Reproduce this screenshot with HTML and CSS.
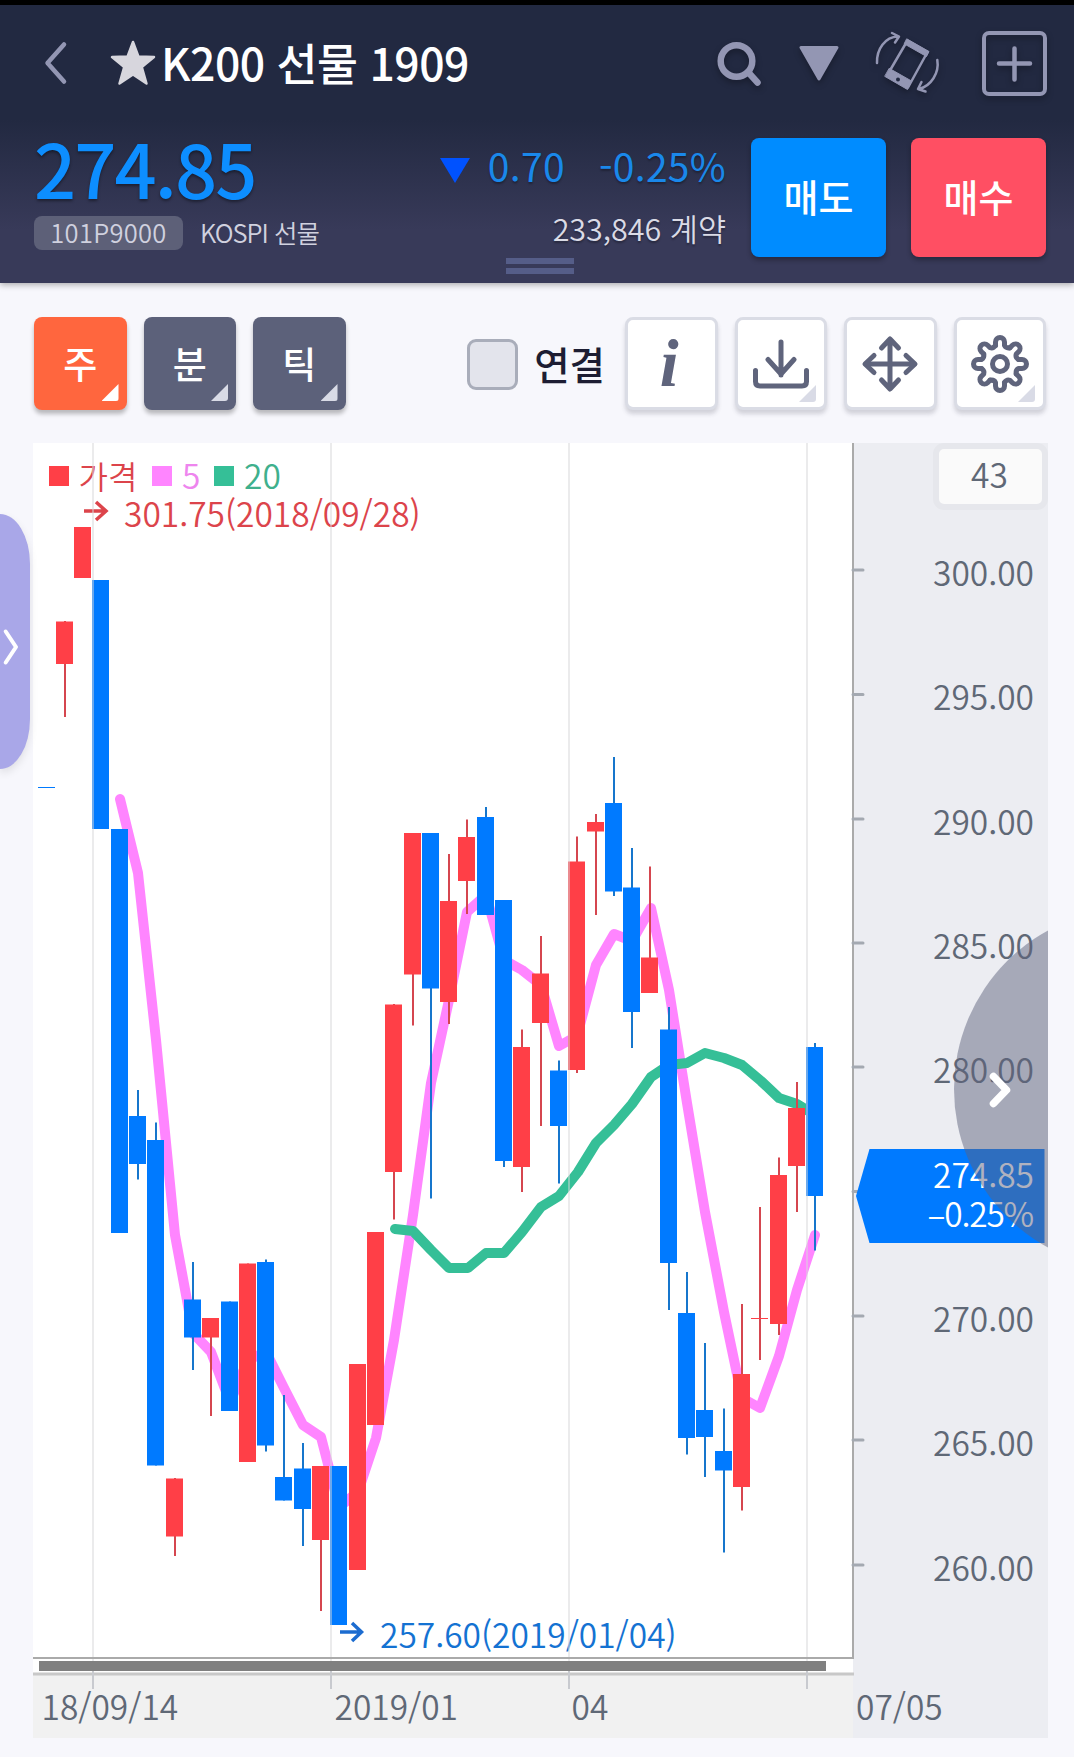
FILE: index.html
```html
<!DOCTYPE html>
<html lang="ko">
<head>
    <meta charset="UTF-8">
    <meta name="viewport" content="width=device-width, initial-scale=1.0">
    <title>K200 선물 1909</title>
    <link rel="stylesheet" href="styles.css">
</head>
<body>

    <header class="header">
        <div class="title-row">
            <svg class="icon-back" width="24" height="44" viewBox="0 0 24 44"><path d="M20 3.5L3.5 22L20 40.500"/></svg>
            <svg class="icon-star" width="46" height="46" viewBox="0 0 46 46"><path d="M23 2L28.400 16.500L44 17L31.800 27L36.500 43.500L23 34.500L9.500 43.500L14.200 27L2 17L17.600 16.500Z"/></svg>
            <h1 class="title">K200 선물 1909</h1>
            <div class="title-icons">
                <svg width="46" height="46" viewBox="0 0 46 46">
                    <circle cx="20.500" cy="21" r="15.800" fill="none" stroke="#9396b3" stroke-width="6.500"/>
                    <path d="M32 32L41.500 42.500" stroke="#9396b3" stroke-width="6.500" stroke-linecap="round"/>
                </svg>
                <svg class="icon-drop" width="42" height="36" viewBox="0 0 42 36"><path d="M3 2.500H39L21 34Z"/></svg>
                <svg class="icon-rotate" width="66" height="64" viewBox="875 30 66 64">
                    <path d="M907.500 39.500L927.500 51L908 86.500L887 74.500Z"/>
                    <path class="solid" d="M907 38L929 50.500L926.500 55.500L904.500 43ZM889.500 67.500L911.500 80L907.500 88.500L885 75.500Z"/>
                    <circle class="dot" cx="898" cy="78.500" r="2"/>
                    <path d="M877 62C876.500 48 885 36 898 35.500M892 32L899 35.500L895 41.500"/>
                    <path d="M937.300 59C939.500 72 931 85 919 88M921.500 81L918 88L925.500 90.500"/>
                </svg>
                <svg class="icon-plus" width="65" height="65" viewBox="0 0 65 65">
                    <rect x="2" y="2" width="61" height="61" rx="5"/>
                    <path d="M32.500 17.500V48.500M17 32.500H48"/>
                </svg>
            </div>
        </div>
        <div class="quote-row">
            <div class="quote-left">
                <div class="price">274.85</div>
                <div class="code-line">
                    <span class="code">101P9000</span>
                    <span class="market">KOSPI 선물</span>
                </div>
            </div>
            <div class="quote-right">
                <div class="change">
                    <svg class="icon-down" width="30" height="25" viewBox="0 0 30 25"><path d="M0 0H30L15 25Z" fill="#0052ff"/></svg>
                    <span>0.70</span>
                    <span class="rate">-0.25%</span>
                </div>
                <div class="volume">233,846 계약</div>
            </div>
            <button class="order sell">매도</button>
            <button class="order buy">매수</button>
        </div>
        <div class="grip"></div>
    </header>

    <nav class="toolbar">
        <button class="period active">주</button>
        <button class="period">분</button>
        <button class="period">틱</button>
        <label class="link"><span class="checkbox"></span>연결</label>
        <button class="tool info">i</button>
        <button class="tool corner">
            <svg width="60" height="60" viewBox="-30 -30 60 60"><path d="M0-22V11M-13-4.500L0 10L13-4.500M-25.500 6.500V17.500Q-25.500 22 -21 22H21Q25.500 22 25.500 17.500V6.500"/></svg>
        </button>
        <button class="tool">
            <svg width="60" height="60" viewBox="-30 -30 60 60">
                <path d="M0-24V24M-8.500-16L0-25L8.500-16M-8.500 16L0 25L8.500 16M-16-8.500L-25 0L-16 8.500M16-8.500L25 0L16 8.500"/>
                <path d="M-24 0H24"/>
            </svg>
        </button>
        <button class="tool corner">
            <svg width="60" height="60" viewBox="-30 -30 60 60">
                <defs><path id="tooth" d="M-4.500-18.500V-22a4.500 4.500 0 0 1 9 0v3.500Q6-15.500 9.900-16.300"/></defs>
                <use href="#tooth"/>
                <use href="#tooth" transform="rotate(45)"/>
                <use href="#tooth" transform="rotate(90)"/>
                <use href="#tooth" transform="rotate(135)"/>
                <use href="#tooth" transform="rotate(180)"/>
                <use href="#tooth" transform="rotate(225)"/>
                <use href="#tooth" transform="rotate(270)"/>
                <use href="#tooth" transform="rotate(315)"/>
                <circle r="7.500"/>
            </svg>
        </button>
    </nav>

    <main class="chart">
        <svg id="chart" width="1015" height="1295" viewBox="33 443 1015 1295">
            <rect x="33" y="443" width="820" height="1231" fill="#fff"/>
            <rect x="33" y="1675" width="820" height="63" fill="#f1f1f1"/>
            <rect x="853" y="443" width="195" height="1295" fill="#ecedf2"/>

            <polyline class="ma5" points="120,799 138,873 156,1040 175,1235 193,1333 211,1352 230,1402 248,1360 266,1352 284,1388 303,1425 321,1437 339,1507 358,1492 376,1438 394,1340 413,1215 431,1083 449,1000 467,912 486,895 504,960 522,970 541,985 559,1046 577,1036 596,965 614,934 632,941 651,908 669,990 687,1103 705,1212 724,1312 742,1398 760,1408 779,1356 797,1290 815,1235"/>
            <polyline class="ma20" points="395,1229 413,1231 431,1250 449,1268 468,1268 486,1253 504,1253 522,1232 541,1207 559,1196 578,1172 596,1143 614,1125 632,1104 651,1077 669,1065 687,1063 705,1053 724,1058 742,1065 761,1081 779,1098 797,1104 815,1115"/>
            <g id="candles"></g>

            <g class="legend">
                <rect x="49" y="466" width="20" height="20" fill="#ff3f47"/>
                <text x="78.500" y="489" class="red">가격</text>
                <rect x="152" y="466" width="20" height="20" fill="#ff85ff"/>
                <text x="182" y="489" class="pink">5</text>
                <rect x="214" y="466" width="20" height="20" fill="#35bf97"/>
                <text x="244" y="489" class="green">20</text>
            </g>
            <path class="arrow high" d="M84 511H106M96 502L106 511L96 520"/>
            <text x="124" y="527" class="red">301.75(2018/09/28)</text>
            <path class="arrow low" d="M340 1632H361M352 1623L361.500 1632L352 1641"/>
            <text x="380" y="1647.500" class="blue">257.60(2019/01/04)</text>

            <path class="grid" d="M93 443V1661M331 443V1661M569 443V1661M807 443V1661"/>
            <path d="M33 1658H853V443" fill="none" stroke="#aaa" stroke-width="2"/>
            <rect x="39" y="1661" width="787" height="10" fill="#808080"/>
            <path d="M33 1674H854" stroke="#c8c8c8" stroke-width="3"/>
            <path d="M93 1671V1689M331 1671V1689M569 1671V1689M807 1671V1689" stroke="#c8cacf" stroke-width="2"/>

            <g class="axis">
                <path d="M853 570H863M853 694.500H863M853 819H863M853 943H863M853 1067H863M853 1191.500H863M853 1316H863M853 1440H863M853 1565H863" stroke="#a4a9b1" stroke-width="3" stroke-linecap="round"/>
                <text x="1034" y="586" class="end">300.00</text>
                <text x="1034" y="710" class="end">295.00</text>
                <text x="1034" y="835" class="end">290.00</text>
                <text x="1034" y="959" class="end">285.00</text>
                <text x="1034" y="1083" class="end">280.00</text>
                <text x="1034" y="1332" class="end">270.00</text>
                <text x="1034" y="1456" class="end">265.00</text>
                <text x="1034" y="1581" class="end">260.00</text>
                <text x="41.500" y="1719.500">18/09/14</text>
                <text x="334.500" y="1719.500">2019/01</text>
                <text x="571.500" y="1719.500">04</text>
                <text x="856" y="1719.500">07/05</text>
                <rect x="936" y="446" width="109" height="61" rx="8" fill="#fafafa" stroke="#e6e7ec" stroke-width="6"/>
                <text x="989.500" y="488" class="middle">43</text>
            </g>

            <path d="M856 1196L869.500 1149H1044.500V1243H869.500Z" fill="#007aff"/>
            <text x="1034" y="1188" class="end white">274.85</text>
            <text x="1033" y="1227" class="end white rate">–0.25%</text>

            <circle cx="1134.600" cy="1089" r="180.600" fill="#5e617c" fill-opacity="0.490"/>
            <path d="M993.500 1076.500L1006.500 1090L993.500 1103.500" fill="none" stroke="#fff" stroke-width="7.500" stroke-linecap="round" stroke-linejoin="round"/>
        </svg>
    </main>

    <div class="drawer">
        <svg width="20" height="40" viewBox="0 0 20 40"><path d="M5.700 4.500L16 20L5.700 35.500"/></svg>
    </div>

    <script>
        // x, body top, body bottom, wick top, wick bottom, u = up / d = down
        const candles = [
            [38, 787, 788, 787, 788, "d"],
            [56, 621.5, 664, 621, 717, "u"],
            [74, 527, 578, 527, 578, "u"],
            [92, 580, 829, 580, 829, "d"],
            [111, 829, 1233, 829, 1233, "d"],
            [129, 1116, 1164, 1090, 1179.5, "d"],
            [147, 1140, 1465.5, 1122.5, 1465.5, "d"],
            [166, 1478.5, 1536.5, 1478, 1556, "u"],
            [184, 1299.5, 1337.5, 1262, 1370, "d"],
            [202, 1318, 1337.5, 1318, 1416, "u"],
            [221, 1301.5, 1411, 1301.5, 1411, "d"],
            [239, 1263.5, 1462, 1263.5, 1462, "u"],
            [257, 1262, 1445.5, 1259.5, 1451.5, "d"],
            [275, 1477, 1500.5, 1395, 1500.5, "d"],
            [294, 1468.5, 1509, 1443, 1546, "d"],
            [312, 1466, 1540, 1466, 1611, "u"],
            [330, 1466, 1625, 1466, 1625, "d"],
            [349, 1364, 1570, 1364, 1570, "u"],
            [367, 1232, 1425, 1232, 1425, "u"],
            [385, 1004.5, 1172, 1004, 1219.5, "u"],
            [404, 833, 974.5, 833, 1025.5, "u"],
            [422, 833, 988.5, 833, 1198.5, "d"],
            [440, 901, 1002, 854, 1024, "u"],
            [458, 837, 881, 819.5, 914, "u"],
            [477, 817, 915, 807, 915, "d"],
            [495, 900, 1161, 900, 1167, "d"],
            [513, 1047, 1167, 1029.5, 1192, "u"],
            [532, 973.5, 1023, 936, 1126, "u"],
            [550, 1070.5, 1126, 1060.5, 1183.5, "d"],
            [568, 861.5, 1070, 836.5, 1073, "u"],
            [587, 822, 831.5, 814, 915, "u"],
            [605, 803, 891.5, 757, 896, "d"],
            [623, 887.5, 1012, 848, 1048, "d"],
            [641, 957.5, 993, 866.5, 993, "u"],
            [660, 1029.5, 1263, 1007, 1310, "d"],
            [678, 1313, 1438, 1272, 1454.5, "d"],
            [696, 1410, 1437, 1343, 1477, "d"],
            [715, 1451, 1470.5, 1408.5, 1552.5, "d"],
            [733, 1374, 1487, 1304, 1510.5, "u"],
            [751, 1318, 1319, 1207, 1360, "u"],
            [770, 1175, 1324, 1157.5, 1335, "u"],
            [788, 1108, 1166, 1082, 1212, "u"],
            [806, 1047, 1196, 1043, 1250.5, "d"]
        ];

        function addRect(parent, x, y, width, height, cls) {
            let rect = document.createElementNS("http://www.w3.org/2000/svg", "rect");
            rect.setAttribute("x", x);
            rect.setAttribute("y", y);
            rect.setAttribute("width", width);
            rect.setAttribute("height", height);
            rect.setAttribute("class", cls);
            parent.appendChild(rect);
        }

        let group = document.getElementById("candles");
        candles.forEach(([x, top, bottom, high, low, dir]) => {
            addRect(group, x + 8, high, 2, low - high, "wick-" + dir);
            addRect(group, x, top, 17, bottom - top, "body-" + dir);
        });
    </script>

</body>
</html>
```
FILE: styles.css
```css
* { box-sizing: border-box; }
body { margin: 0; height: 1757px; background: #f7f7fc; font-family: "Noto Sans CJK KR", "Noto Sans", sans-serif; position: relative; overflow: hidden; }
button { border: none; padding: 0; font-family: inherit; }
svg { display: block; flex: none; }

/* header */
.header { height: 283px; border-top: 5px solid #000; background: linear-gradient(#222941 0, #222941 115px, #383a59 225px); box-shadow: 0 2px 6px rgba(0, 0, 0, 0.3); }
.title-row { display: flex; align-items: center; height: 116px; padding: 0 27px 0 44px; }
.icon-back path { fill: none; stroke: #9396b3; stroke-width: 4.5; stroke-linecap: round; stroke-linejoin: round; }
.icon-star { margin-left: 42px; }
.icon-star path { fill: #d7d6dd; stroke: #d7d6dd; stroke-width: 2.5; stroke-linejoin: round; }
.title { margin: 0 0 3px 5px; font-size: 44.5px; line-height: 60px; font-weight: 500; letter-spacing: -0.5px; color: #fff; white-space: nowrap; }
.title-icons { display: flex; align-items: center; margin-left: auto; filter: drop-shadow(0 3px 3px rgba(0, 0, 0, 0.3)); }
.icon-drop { margin-left: 36px; }
.icon-drop path { fill: #9396b3; stroke: #9396b3; stroke-width: 3; stroke-linejoin: round; }
.icon-rotate { margin-left: 35px; }
.icon-rotate path { fill: none; stroke: #9396b3; stroke-width: 2.5; stroke-linecap: round; stroke-linejoin: round; }
.icon-rotate .solid { fill: #9396b3; stroke-width: 1; }
.icon-rotate .dot { fill: #222941; }
.icon-plus { margin-left: 41px; }
.icon-plus rect { fill: none; stroke: #9396b3; stroke-width: 4; }
.icon-plus path { stroke: #9396b3; stroke-width: 4.5; stroke-linecap: round; }

.quote-row { display: flex; height: 119px; margin-top: 17px; padding: 0 28px 0 34px; }
.price { margin-top: -8px; font-size: 74px; line-height: 74px; font-weight: 500; letter-spacing: -1.9px; color: #0d8eff; text-shadow: 0 2px 3px rgba(0, 0, 0, 0.4); }
.code-line { display: flex; align-items: center; margin-top: 12px; height: 34px; font-size: 25.500px; color: #d0d1df; font-weight: 350; }
.code { width: 149px; height: 34px; border-radius: 8px; background: #5d6078; text-align: center; line-height: 31px; letter-spacing: 0.3px; }
.market { margin-left: 17px; line-height: 32px; margin-bottom: 2px; letter-spacing: -1px; }
.quote-right { margin-left: auto; text-align: right; text-shadow: 0 2px 2px rgba(0, 0, 0, 0.3); }
.change { display: flex; align-items: center; justify-content: flex-end; margin-top: 7px; height: 40px; font-size: 39px; line-height: 40px; letter-spacing: 0.3px; color: #1a88ea; }
.change span { margin-left: 18px; }
.change .rate { margin-left: 34px; }
.icon-down { margin-top: 10px; }
.volume { margin-top: 23px; font-size: 30.500px; line-height: 40px; color: #dadbe6; font-weight: 350; }
.order { width: 135px; height: 119px; margin-left: 25px; border-radius: 8px; font-size: 38px; font-weight: 500; color: #fff; line-height: 40px; padding-bottom: 4px; box-shadow: 0 3px 5px rgba(0, 0, 0, 0.3); }
.sell { background: #008cff; }
.buy { background: #ff4f63; }
.grip { width: 68px; height: 16px; margin: 1px auto 0; border-top: 6px solid #555d88; border-bottom: 6px solid #555d88; position: relative; left: 3px; }

/* toolbar */
.toolbar { display: flex; align-items: flex-start; gap: 17px; height: 160px; padding: 34px 28px 0 34px; }
.period, .tool { position: relative; width: 92.500px; height: 93px; border-radius: 8px; flex: none; }
.period { background: #5c617a; color: #fff; font-size: 37px; font-weight: 500; line-height: 40px; padding-bottom: 2px; box-shadow: 0 4px 4px rgba(0, 0, 0, 0.25); }
.period.active { background: #ff663e; }
.period::after, .corner::after { content: ""; position: absolute; width: 17px; height: 17px; background: #d9dbe6; clip-path: polygon(100% 0, 100% 100%, 0 100%); border-bottom-right-radius: 3px; }
.period::after { right: 8px; bottom: 9px; }
.period.active::after { background: #fff; }
.corner::after { right: 8px; bottom: 5px; }
.link { display: flex; align-items: center; margin: 0 3px 0 auto; height: 93px; padding-bottom: 2px; font-size: 38.500px; font-weight: 500; color: #1d1d33; }
.checkbox { width: 51px; height: 51px; margin: 3px 16px 0 0; border: 3.5px solid #a9adba; border-radius: 9px; background: #e3e4ec; }
.tool { display: flex; align-items: center; justify-content: center; background: #fff; border: 3.5px solid #dadce5; box-shadow: 0 4px 4px rgba(60, 60, 80, 0.2); }
.tool svg { fill: none; stroke: #5f647c; stroke-width: 5; stroke-linecap: round; stroke-linejoin: round; }
.tool.info { padding: 0 4px 2px 0; font: italic bold 68px/68px "Liberation Serif", serif; color: #5f647c; }

/* chart */
.chart { margin-left: 33px; width: 1015px; }
.chart text { font-size: 33.500px; font-weight: 350; fill: #5f6876; }
.chart .legend .red { font-size: 32px; }
.chart .end { text-anchor: end; }
.chart .middle { text-anchor: middle; }
.chart .rate { letter-spacing: -1.2px; }
.chart .red { fill: #dc444b; }
.chart .blue { fill: #1472d2; }
.chart .pink { fill: #ee85ee; }
.chart .green { fill: #3fb08d; }
.chart .white { fill: #fff; }
.ma5, .ma20 { fill: none; stroke-width: 10; stroke-linecap: round; stroke-linejoin: round; }
.ma5 { stroke: #ff85ff; }
.ma20 { stroke: #35bf97; }
.body-u { fill: #ff3f47; }
.body-d { fill: #007aff; }
.wick-u { fill: #d5464f; }
.wick-d { fill: #1676cc; }
.grid { stroke: #d7d7da; stroke-opacity: 0.5; stroke-width: 2; }
.arrow { fill: none; stroke-width: 3.5; }
.high { stroke: #dc444b; }
.low { stroke: #1c6cd0; }

/* side drawer handle, overlaps the chart edge */
.drawer { position: absolute; left: 0; top: 514px; width: 30px; height: 255px; padding-top: 10px; display: flex; align-items: center; border-radius: 0 30px 30px 0 / 0 50px 50px 0; background: #a9a7e8; box-shadow: 0 4px 8px rgba(0, 0, 0, 0.1); }
.drawer path { fill: none; stroke: #fff; stroke-width: 4; stroke-linecap: round; stroke-linejoin: round; }
```
